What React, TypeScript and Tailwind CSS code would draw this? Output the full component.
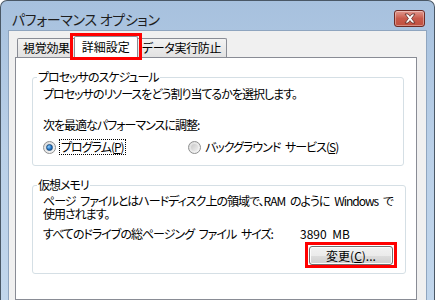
import React from 'react';

const font = "font-['Noto_Sans_CJK_JP','Noto_Sans',sans-serif] [font-feature-settings:'palt']";

const Radio: React.FC<{ checked?: boolean }> = ({ checked }) => (
  <span className="relative inline-flex h-[13px] w-[13px] shrink-0 items-center justify-center rounded-full border border-[#8e8f8f] bg-gradient-to-br from-[#dcdcdc] to-[#f7f7f7]">
    {checked ? (
      <span className="h-[7px] w-[7px] rounded-full border border-[#1f4f7e] bg-[radial-gradient(circle_at_35%_35%,#8fd0ff,#1a6cc0_60%,#0d3f7a)]" />
    ) : (
      <span className="h-[7px] w-[7px] rounded-full bg-gradient-to-br from-[#c9c9c9] to-[#eeeeee]" />
    )}
  </span>
);

const Tab: React.FC<{ label: string; selected?: boolean }> = ({ label, selected }) =>
  selected ? (
    <div className="relative z-10 -mx-[2px] -mb-px">
      <div className="h-[22px] rounded-t-[2px] border border-b-0 border-[#898c95] bg-white px-[7px] leading-[20px]">
        {label}
      </div>
      <div className="pointer-events-none absolute -left-[4px] -right-[4px] -top-[3px] -bottom-[2px] border-[3px] border-[#ff0000]" />
    </div>
  ) : (
    <div className="mt-[2px] h-[19px] rounded-t-[2px] border border-b-0 border-[#898c95] bg-gradient-to-b from-[#f3f3f3] to-[#e2e2e2] px-[5px] leading-[18px] tracking-[-0.3px]">
      {label}
    </div>
  );

const Group: React.FC<{ title: string; children: React.ReactNode; className?: string }> = ({ title, children, className }) => (
  <fieldset className={`ml-[16px] w-[372px] rounded-[3px] border border-[#d5dfe5] tracking-[-1px] [word-spacing:3px] ${className ?? ''}`}>
    <legend className="ml-[4px] px-[1px] leading-[16px]">{title}</legend>
    {children}
  </fieldset>
);

export default function App() {
  return (
    <div className={`h-[300px] w-[435px] overflow-hidden bg-white text-[12px] text-black ${font}`}>
      <div className="flex h-full flex-col rounded-t-[7px] border border-b-0 border-[#4a5866] bg-gradient-to-b from-[#a7c1de] via-[#bad0e8] to-[#c1d6ec]">
        {/* title bar */}
        <div className="flex h-[29px] shrink-0 items-start justify-between pl-[11px] pr-[9px]">
          <span className="mt-[8px] text-[14px] leading-[20px] tracking-[-0.3px] text-[#1e1e1e]">パフォーマンス オプション</span>
          <button className="mt-[9px] flex h-[17px] w-[31px] items-center justify-center rounded-[3px] border border-[#6e2a24] bg-gradient-to-b from-[#e1998f] via-[#c85a4b] to-[#c0503f] shadow-[inset_0_0_0_1px_rgba(255,255,255,0.35)]">
            <svg width="14" height="11" viewBox="0 0 14 11">
              <path
                d="M2 1h3l2 2.3L9 1h3L8.6 5.5 12 10H9L7 7.6 5 10H2l3.4-4.5z"
                fill="#ffffff"
                stroke="#5b2a25"
                strokeWidth="0.8"
                strokeLinejoin="round"
              />
            </svg>
          </button>
        </div>

        {/* body */}
        <div className="flex min-h-0 flex-1 pl-[7px] pr-[7px]">
          <div className="flex flex-1 flex-col border-l border-t border-[#8fa5bf] bg-[#f0f0f0] pl-[6px] pr-[9px] pt-[5px]">
            <div className="flex pl-[2px]">
              <Tab label="視覚効果" />
              <Tab label="詳細設定" selected />
              <Tab label="データ実行防止" />
            </div>
            <div className="flex-1 border border-[#898c95] bg-white">
              <Group title="プロセッサのスケジュール" className="mt-[11px] pb-[10px]">
                <div className="pl-[10px] pt-[1px] leading-[16px]">
                  <p>プロセッサのリソースをどう割り当てるかを選択します。</p>
                  <p className="mt-[15px]">次を最適なパフォーマンスに調整:</p>
                  <div className="mt-[6px] flex items-center">
                    <label className="flex w-[145px] items-center gap-[3px]">
                      <Radio checked />
                      <span className="border border-dotted border-black px-[1px] leading-[14px]">
                        プログラム(<span className="underline">P</span>)
                      </span>
                    </label>
                    <label className="flex items-center gap-[4px]">
                      <Radio />
                      <span>
                        バックグラウンド サービス(<span className="underline">S</span>)
                      </span>
                    </label>
                  </div>
                </div>
              </Group>

              <Group title="仮想メモリ" className="mt-[11px] pb-[8px]">
                <div className="pl-[10px] pr-[12px] pt-[1px]">
                  <p className="whitespace-nowrap leading-[13px]">
                    ページ ファイルとはハードディスク上の領域で、RAM のように Windows で
                    <br />
                    使用されます。
                  </p>
                  <div className="mt-[6px] flex leading-[16px]">
                    <span className="w-[257px] shrink-0 whitespace-nowrap">すべてのドライブの総ページング ファイル サイズ:</span>
                    <span className="tracking-normal">3890 MB</span>
                  </div>
                  <div className="mt-[4px] flex justify-end">
                    <div className="relative">
                      <button className="h-[19px] w-[84px] rounded-[3px] border border-[#707070] bg-[linear-gradient(#f2f2f2,#ebebeb_50%,#dddddd_50%,#cfcfcf)] leading-[17px] tracking-normal shadow-[inset_0_0_0_1px_#fcfcfc]">
                        変更(<span className="underline">C</span>)...
                      </button>
                      <div className="pointer-events-none absolute -left-[4px] -right-[4px] -top-[4px] -bottom-[3px] border-[3px] border-[#ff0000]" />
                    </div>
                  </div>
                </div>
              </Group>
            </div>
          </div>
          <div className="w-px bg-[#8fa5bf]" />
        </div>
      </div>
    </div>
  );
}
